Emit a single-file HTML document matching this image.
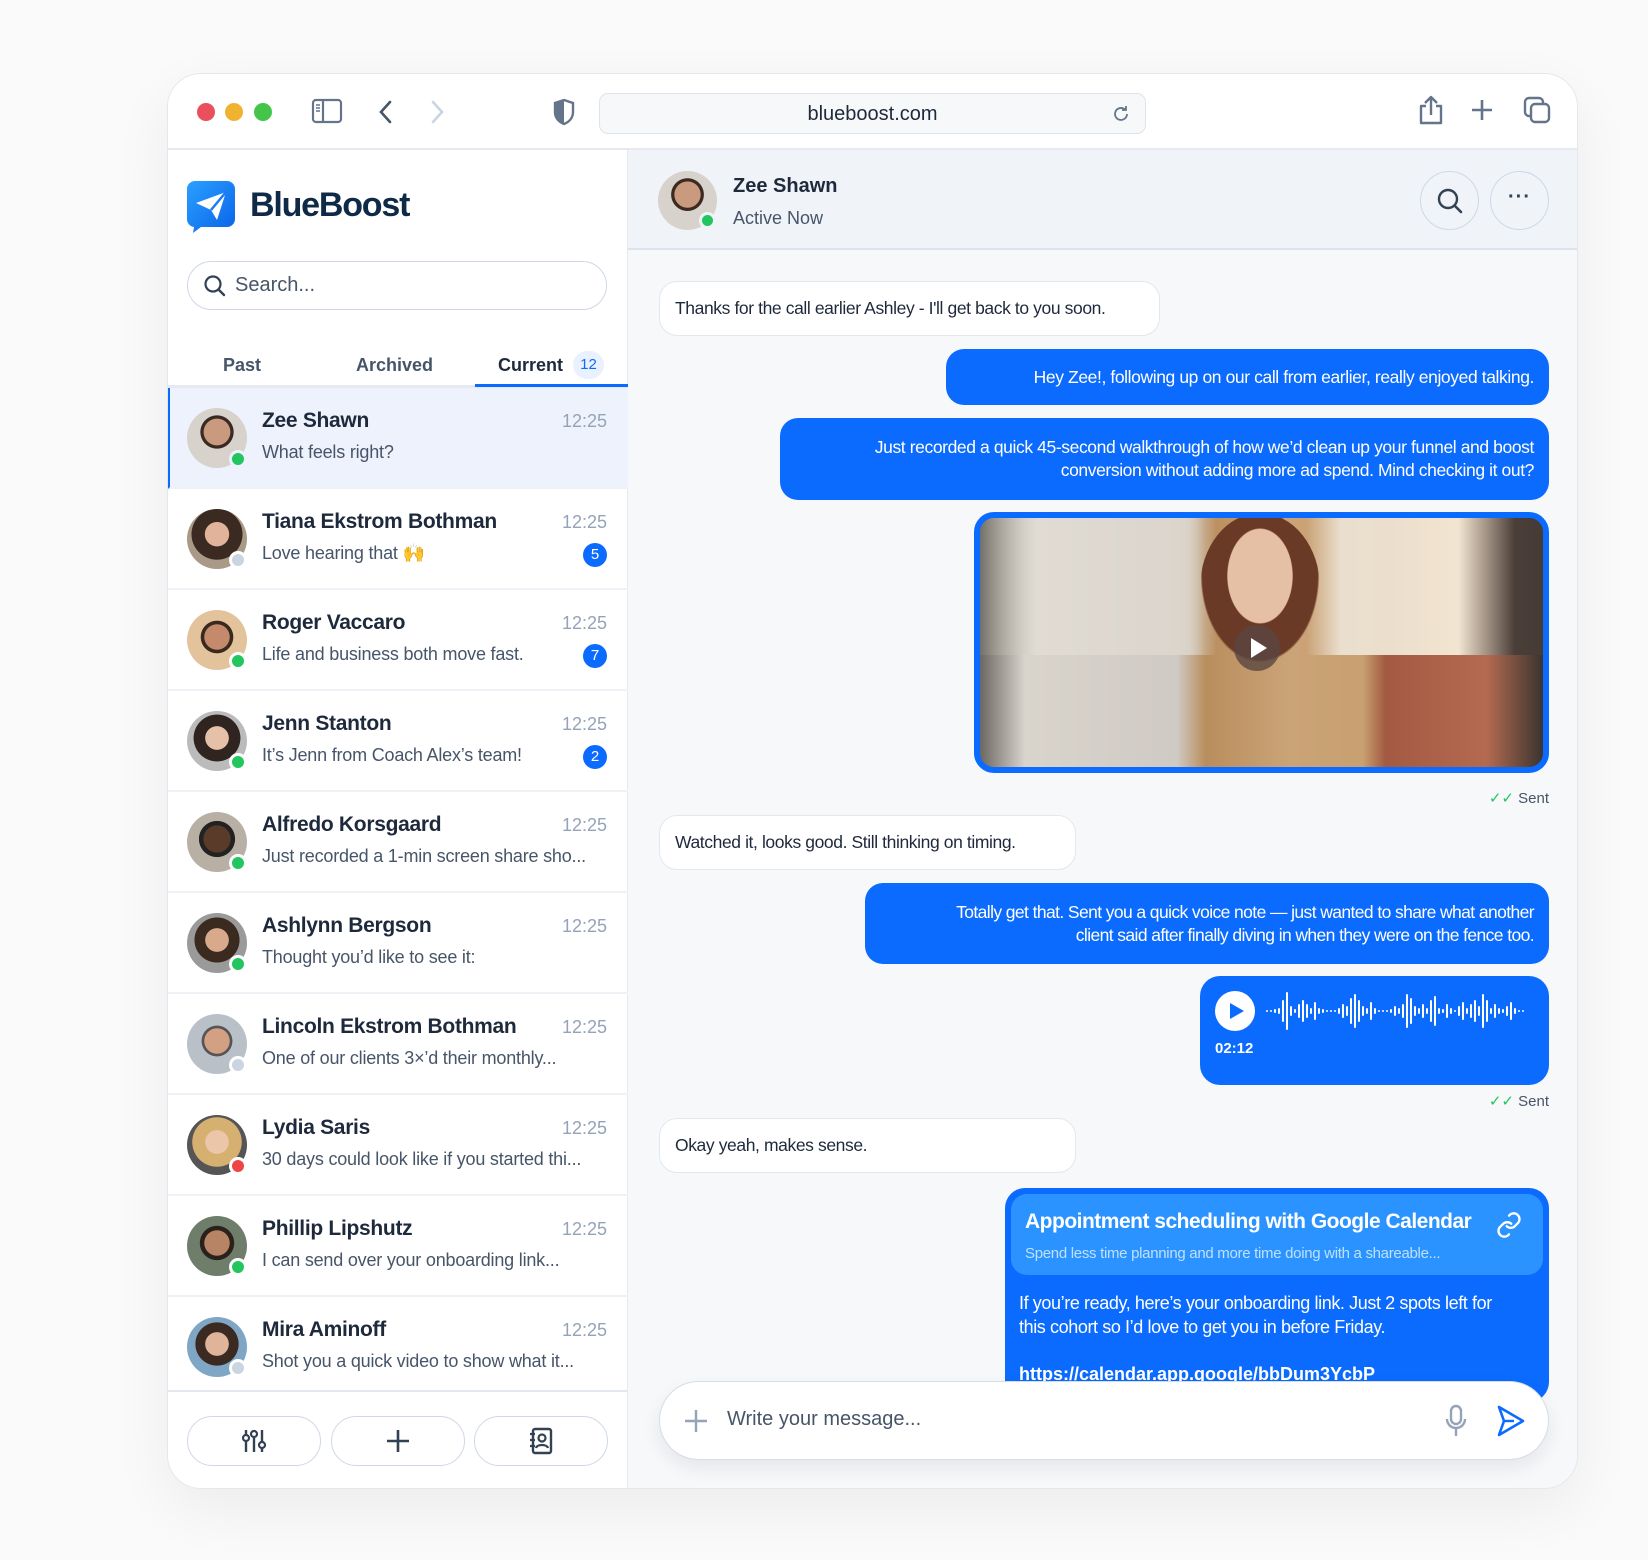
<!DOCTYPE html>
<html><head><meta charset="utf-8"><style>
*{box-sizing:border-box;margin:0;padding:0}
body{width:1648px;height:1560px;background:#fafafa;font-family:"Liberation Sans",sans-serif;position:relative;overflow:hidden;color:#1e293b}
.abs{position:absolute}
.win{left:167px;top:73px;width:1411px;height:1416px;background:#fff;border:1px solid #e3e7ee;border-radius:34px;overflow:hidden;box-shadow:0 20px 60px rgba(0,0,0,.06)}
.tb{left:0;top:0;width:1411px;height:76px;border-bottom:2px solid #e6e9ef;background:#fff}
.dot{width:18px;height:18px;border-radius:50%;top:29px}
.url{left:431px;top:19px;width:547px;height:41px;border:1px solid #dfe3ea;border-radius:9px;background:#f7f8fa;text-align:center;line-height:40px;font-size:20px;color:#1e293b}
.side{left:0;top:76px;width:460px;height:1340px;background:#fff;border-right:1px solid #e6e9ef}
.chat{left:460px;top:76px;width:951px;height:1340px;background:#f7f8fa;overflow:hidden}
.item{position:absolute;left:0;width:460px;height:101px;border-bottom:2px solid #eef1f5}
.av{position:absolute;left:19px;top:20px;width:60px;height:60px;border-radius:50%}
.st{position:absolute;left:61px;top:62px;width:18px;height:18px;border-radius:50%;border:3px solid #fff}
.nm{position:absolute;left:94px;top:21px;font-size:21px;font-weight:bold;color:#1e293b;letter-spacing:-.3px}
.pv{position:absolute;left:94px;top:54px;font-size:18px;color:#475569;white-space:nowrap;letter-spacing:-.2px}
.tm{position:absolute;right:21px;top:23px;font-size:18px;color:#94a3b8}
.bd{position:absolute;right:21px;top:54px;width:24px;height:24px;border-radius:50%;background:#0b6bff;color:#fff;font-size:15px;text-align:center;line-height:24px}
.bub{position:absolute;font-size:17.5px;line-height:23px;letter-spacing:-.4px;border-radius:18px;padding:0 15px;display:flex;align-items:center;white-space:nowrap}
.in{background:#fff;border:1px solid #e3e7ee;color:#1e293b}
.out{background:#0b6bff;color:#fff;justify-content:flex-end;text-align:right}
.fb{position:absolute;top:1266px;width:134px;height:50px;border:1.5px solid #cfd8e6;border-radius:25px;display:flex;align-items:center;justify-content:center}
.sent{position:absolute;font-size:15px;color:#475569;right:30px}
</style></head><body>
<div class="abs win">
 <div class="abs tb">
  <div class="abs dot" style="left:29px;background:#e9505c"></div>
  <div class="abs dot" style="left:57px;background:#f0b330"></div>
  <div class="abs dot" style="left:86px;background:#44c54a"></div>
  <svg class="abs" style="left:143px;top:24px" width="32" height="28" viewBox="0 0 32 28"><rect x="2" y="2" width="28" height="22" rx="3" fill="none" stroke="#64748b" stroke-width="2.2"/><line x1="12" y1="2" x2="12" y2="24" stroke="#64748b" stroke-width="2.2"/><path d="M5 7h4M5 10h4M5 13h4" stroke="#64748b" stroke-width="1.5"/></svg>
  <svg class="abs" style="left:208px;top:24px" width="20" height="28"><path d="M14 4L5 14l9 10" fill="none" stroke="#475569" stroke-width="2.6" stroke-linecap="round"/></svg>
  <svg class="abs" style="left:259px;top:24px" width="20" height="28"><path d="M6 4l9 10-9 10" fill="none" stroke="#cbd5e1" stroke-width="2.6" stroke-linecap="round"/></svg>
  <svg class="abs" style="left:384px;top:24px" width="24" height="28" viewBox="0 0 24 28"><path d="M12 2L3 5v9c0 6 4 10 9 12 5-2 9-6 9-12V5z" fill="none" stroke="#64748b" stroke-width="2.4"/><path d="M12 2L3 5v9c0 6 4 10 9 12z" fill="#64748b"/></svg>
  <div class="abs url">blueboost.com<svg class="abs" style="right:14px;top:10px" width="20" height="20" viewBox="0 0 20 20"><path d="M16 10a6 6 0 1 1-2-4.5" fill="none" stroke="#64748b" stroke-width="1.8"/><path d="M15 2v4h-4" fill="none" stroke="#64748b" stroke-width="1.8"/></svg></div>
  <svg class="abs" style="left:1250px;top:20px" width="26" height="32" viewBox="0 0 26 32"><path d="M8 12H3v17h20V12h-5M13 21V3M7 9l6-6 6 6" fill="none" stroke="#64748b" stroke-width="2.4" stroke-linejoin="round"/></svg>
  <svg class="abs" style="left:1302px;top:24px" width="24" height="24"><path d="M12 2v20M2 12h20" stroke="#64748b" stroke-width="2.6"/></svg>
  <svg class="abs" style="left:1355px;top:22px" width="28" height="28" viewBox="0 0 28 28"><rect x="2" y="2" width="18" height="18" rx="4" fill="none" stroke="#64748b" stroke-width="2.4"/><rect x="8" y="8" width="18" height="18" rx="4" fill="#fff" stroke="#64748b" stroke-width="2.4"/></svg>
 </div>
 <div class="abs side">
  <svg class="abs" style="left:19px;top:31px" width="48" height="52" viewBox="0 0 48 52"><defs><linearGradient id="lg" x1="0" y1="0" x2="1" y2="1"><stop offset="0" stop-color="#2aa0ff"/><stop offset="1" stop-color="#0a63e8"/></linearGradient></defs><path d="M8 0h32a8 8 0 0 1 8 8v30a8 8 0 0 1-8 8H14l-8 6 1-6a8 8 0 0 1-7-8V8a8 8 0 0 1 8-8z" fill="url(#lg)"/><path d="M9 22l30-11-9 28-6-10z" fill="#fff"/><path d="M24 29l15-18" stroke="#1a7df5" stroke-width="2.5"/></svg>
  <div class="abs" style="left:82px;top:36px;font-size:34px;font-weight:bold;color:#0f2a47;letter-spacing:-1.2px">BlueBoost</div>
  <div class="abs" style="left:19px;top:111px;width:420px;height:49px;border:1.5px solid #cfd8e6;border-radius:25px">
   <svg class="abs" style="left:15px;top:12px" width="24" height="24"><circle cx="10" cy="10" r="7.5" fill="none" stroke="#334155" stroke-width="2.2"/><path d="M16 16l5 5" stroke="#334155" stroke-width="2.4" stroke-linecap="round"/></svg>
   <div class="abs" style="left:47px;top:12px;font-size:20px;color:#475569">Search...</div>
  </div>
  <div class="abs" style="left:55px;top:205px;font-size:18px;font-weight:bold;color:#475569">Past</div>
  <div class="abs" style="left:188px;top:205px;font-size:18px;font-weight:bold;color:#475569">Archived</div>
  <div class="abs" style="left:330px;top:205px;font-size:18px;font-weight:bold;color:#1e293b">Current</div>
  <div class="abs" style="left:405px;top:201px;width:31px;height:28px;border-radius:14px;background:#eaf1fe;color:#0b6bff;font-size:15px;text-align:center;line-height:28px">12</div>
  <div class="abs" style="left:0;top:235px;width:460px;height:3px;background:#e6e9ef"></div>
  <div class="abs" style="left:307px;top:234px;width:153px;height:3px;background:#0b6bff"></div>
  <div class="abs" style="left:0;top:238px;width:460px;height:1003px;overflow:hidden">
   <div class="item" style="top:0;background:#eef2fd;border-left:2px solid #0b6bff"><div class="av" style="left:17px;background:radial-gradient(circle at 50% 40%,#c99a7d 0 28%,#3a2a22 29% 35%,#d8d2cc 36%)"></div><div class="st" style="left:59px;background:#22c55e;border-color:#eef2fd"></div><div class="nm" style="left:92px">Zee Shawn</div><div class="pv" style="left:92px">What feels right?</div><div class="tm">12:25</div></div>
   <div class="item" style="top:101px"><div class="av" style="background:radial-gradient(circle at 50% 42%,#e0b39a 0 26%,#3b2a22 27% 55%,#a89a86 56%)"></div><div class="st" style="background:#cbd5e1"></div><div class="nm">Tiana Ekstrom Bothman</div><div class="pv">Love hearing that 🙌</div><div class="tm">12:25</div><div class="bd">5</div></div>
   <div class="item" style="top:202px"><div class="av" style="background:radial-gradient(circle at 50% 45%,#c48a6c 0 28%,#3a2a1e 29% 36%,#e3c39c 37%)"></div><div class="st" style="background:#22c55e"></div><div class="nm">Roger Vaccaro</div><div class="pv">Life and business both move fast.</div><div class="tm">12:25</div><div class="bd">7</div></div>
   <div class="item" style="top:303px"><div class="av" style="background:radial-gradient(circle at 50% 45%,#e6c1a8 0 26%,#2f2420 27% 52%,#bbb 53%)"></div><div class="st" style="background:#22c55e"></div><div class="nm">Jenn Stanton</div><div class="pv">It’s Jenn from Coach Alex’s team!</div><div class="tm">12:25</div><div class="bd">2</div></div>
   <div class="item" style="top:404px"><div class="av" style="background:radial-gradient(circle at 50% 45%,#5a3a28 0 30%,#222 31% 40%,#b8b0a5 41%)"></div><div class="st" style="background:#22c55e"></div><div class="nm">Alfredo Korsgaard</div><div class="pv">Just recorded a 1-min screen share sho...</div><div class="tm">12:25</div></div>
   <div class="item" style="top:505px"><div class="av" style="background:radial-gradient(circle at 50% 45%,#d9a98c 0 26%,#3a2a20 27% 50%,#9a9a9a 51%)"></div><div class="st" style="background:#22c55e"></div><div class="nm">Ashlynn Bergson</div><div class="pv">Thought you’d like to see it:</div><div class="tm">12:25</div></div>
   <div class="item" style="top:606px"><div class="av" style="background:radial-gradient(circle at 50% 45%,#d4a084 0 28%,#555 29% 34%,#b9c0c8 35%)"></div><div class="st" style="background:#cbd5e1"></div><div class="nm">Lincoln Ekstrom Bothman</div><div class="pv">One of our clients 3×’d their monthly...</div><div class="tm">12:25</div></div>
   <div class="item" style="top:707px"><div class="av" style="background:radial-gradient(circle at 50% 45%,#ecc6a8 0 26%,#d6b070 27% 55%,#555 56%)"></div><div class="st" style="background:#ef4444"></div><div class="nm">Lydia Saris</div><div class="pv">30 days could look like if you started thi...</div><div class="tm">12:25</div></div>
   <div class="item" style="top:808px"><div class="av" style="background:radial-gradient(circle at 50% 45%,#b88466 0 28%,#2a211b 29% 38%,#6f7e6a 39%)"></div><div class="st" style="background:#22c55e"></div><div class="nm">Phillip Lipshutz</div><div class="pv">I can send over your onboarding link...</div><div class="tm">12:25</div></div>
   <div class="item" style="top:909px;border-bottom:none"><div class="av" style="background:radial-gradient(circle at 50% 45%,#e0b49a 0 26%,#3a2a22 27% 48%,#7fa6c4 49%)"></div><div class="st" style="background:#cbd5e1"></div><div class="nm">Mira Aminoff</div><div class="pv">Shot you a quick video to show what it...</div><div class="tm">12:25</div></div>
  </div>
  <div class="abs" style="left:0;top:1240px;width:460px;height:2px;background:#e3e8ef"></div>
  <div class="fb" style="left:19px"><svg width="28" height="26" viewBox="0 0 28 26"><path d="M6 2v22M14 2v22M22 2v22" stroke="#334155" stroke-width="2.4"/><circle cx="6" cy="10" r="3" fill="#fff" stroke="#334155" stroke-width="2.2"/><circle cx="14" cy="6" r="3" fill="#fff" stroke="#334155" stroke-width="2.2"/><circle cx="22" cy="17" r="3" fill="#fff" stroke="#334155" stroke-width="2.2"/></svg></div>
  <div class="fb" style="left:163px"><svg width="26" height="26"><path d="M13 2v22M2 13h22" stroke="#334155" stroke-width="2.6"/></svg></div>
  <div class="fb" style="left:306px"><svg width="26" height="28" viewBox="0 0 26 28"><rect x="5" y="2" width="18" height="24" rx="2" fill="none" stroke="#334155" stroke-width="2.4"/><circle cx="14" cy="11" r="3.5" fill="none" stroke="#334155" stroke-width="2.2"/><path d="M8 21c1-4 11-4 12 0M2 7h5M2 13h5M2 19h5" stroke="#334155" stroke-width="2.2" fill="none"/></svg></div>
 </div>
 <div class="abs chat">
  <div class="abs" style="left:0;top:0;width:951px;height:100px;background:#f0f3f8;border-bottom:2px solid #dde3ec"></div>
  <div class="abs" style="left:30px;top:21px;width:59px;height:59px;border-radius:50%;background:radial-gradient(circle at 50% 40%,#c99a7d 0 28%,#3a2a22 29% 35%,#d8d2cc 36%)"></div>
  <div class="abs" style="left:71px;top:62px;width:17px;height:17px;border-radius:50%;background:#22c55e;border:3px solid #f0f3f8"></div>
  <div class="abs" style="left:105px;top:25px;font-size:20px;font-weight:bold;color:#1e293b">Zee Shawn</div>
  <div class="abs" style="left:105px;top:58px;font-size:18px;color:#475569">Active Now</div>
  <div class="abs" style="left:792px;top:21px;width:59px;height:59px;border-radius:50%;border:1.5px solid #cfd8e6"><svg class="abs" style="left:15px;top:15px" width="28" height="28"><circle cx="12" cy="12" r="9" fill="none" stroke="#334155" stroke-width="2.4"/><path d="M19 19l6 6" stroke="#334155" stroke-width="2.6" stroke-linecap="round"/></svg></div>
  <div class="abs" style="left:862px;top:21px;width:59px;height:59px;border-radius:50%;border:1.5px solid #cfd8e6;text-align:center;line-height:50px;font-size:20px;font-weight:bold;color:#334155;letter-spacing:1px">···</div>

  <div class="bub in" style="left:31px;top:131px;width:501px;height:55px">Thanks for the call earlier Ashley - I'll get back to you soon.</div>
  <div class="bub out" style="left:318px;top:199px;width:603px;height:56px">Hey Zee!, following up on our call from earlier, really enjoyed talking.</div>
  <div class="bub out" style="left:152px;top:268px;width:769px;height:82px">Just recorded a quick 45-second walkthrough of how we’d clean up your funnel and boost<br>conversion without adding more ad spend. Mind checking it out?</div>
  <div class="abs" style="left:346px;top:362px;width:575px;height:261px;border:6px solid #0b6bff;border-radius:20px;overflow:hidden;background:linear-gradient(90deg,#6b6762 0%,#d9d4cc 8%,#cfcac3 35%,#b98e5e 40%,#caa377 55%,#c8a071 68%,#a35a42 72%,#b46a4f 90%,#3a3430 100%)">
   <div class="abs" style="left:0;top:0;width:100%;height:55%;background:linear-gradient(90deg,rgba(120,120,110,.5) 0%,rgba(225,220,212,.9) 10%,rgba(220,214,205,.9) 37%,rgba(0,0,0,0) 42%,rgba(0,0,0,0) 58%,rgba(235,225,210,.95) 64%,rgba(245,235,215,.95) 85%,rgba(70,60,55,.9) 95%)"></div>
   <div class="abs" style="left:220px;top:-5px;width:120px;height:150px;border-radius:50%;background:radial-gradient(ellipse at 50% 42%,#e6c0a4 0 38%,#6a3a26 39% 68%,transparent 70%)"></div>
   <div class="abs" style="left:254px;top:107px;width:46px;height:46px;border-radius:50%;background:rgba(90,70,65,.8)"><svg class="abs" style="left:15px;top:12px" width="20" height="22"><path d="M2 1l16 10L2 21z" fill="#fff"/></svg></div>
  </div>
  <div class="sent" style="top:639px"><span style="color:#22c55e">✓✓</span> Sent</div>

  <div class="bub in" style="left:31px;top:665px;width:417px;height:55px">Watched it, looks good. Still thinking on timing.</div>
  <div class="bub out" style="left:237px;top:733px;width:684px;height:81px;letter-spacing:-.6px">Totally get that. Sent you a quick voice note — just wanted to share what another<br>client said after finally diving in when they were on the fence too.</div>
  <div class="abs" style="left:572px;top:826px;width:349px;height:109px;border-radius:20px;background:#0b6bff">
   <div class="abs" style="left:15px;top:15px;width:40px;height:40px;border-radius:50%;background:#fff"><svg class="abs" style="left:14px;top:11px" width="16" height="18"><path d="M1 1l14 8L1 17z" fill="#0b6bff"/></svg></div>
   <svg class="abs" style="left:65px;top:13px" width="272" height="44" viewBox="0 0 272 44">
    <g stroke="#fff" stroke-width="2" stroke-linecap="round">
    <path d="M2 22v0M6 22v0M10 21v2M14 20v4M18 12v20M22 4v36M26 18v8M30 21v2M34 16v12M38 12v20M42 16v12M46 20v4M50 14v16M54 20v4M58 21v2M62 22v0M66 22v0M70 22v0M74 20v4M78 16v12M82 18v8M86 10v24M90 6v32M94 12v20M98 18v8M102 20v4M106 14v16M110 20v4M114 22v0M118 22v0M122 22v0M126 21v2M130 18v8M134 20v4M138 16v12M142 6v32M146 10v24M150 18v8M154 20v4M158 16v12M162 20v4M166 12v20M170 8v28M174 20v4M178 21v2M182 16v12M186 20v4M190 22v0M194 18v8M198 14v16M202 20v4M206 16v12M210 12v20M214 18v8M218 6v32M222 12v20M226 20v4M230 16v12M234 20v4M238 21v2M242 18v8M246 14v16M250 20v4M254 22v0M258 22v0"/></g></svg>
   <div class="abs" style="left:15px;top:64px;font-size:15px;font-weight:bold;color:#fff">02:12</div>
  </div>
  <div class="sent" style="top:942px"><span style="color:#22c55e">✓✓</span> Sent</div>

  <div class="bub in" style="left:31px;top:968px;width:417px;height:55px">Okay yeah, makes sense.</div>

  <div class="abs" style="left:377px;top:1038px;width:544px;height:214px;border-radius:20px;background:#0b6bff;overflow:hidden">
   <div class="abs" style="left:6px;top:6px;width:532px;height:81px;border-radius:16px;background:#2b93ff">
    <div class="abs" style="left:14px;top:16px;font-size:21px;font-weight:bold;color:#fff;letter-spacing:-.5px">Appointment scheduling with Google Calendar</div>
    <div class="abs" style="left:14px;top:51px;font-size:15px;color:#bfe0ff;letter-spacing:-.3px">Spend less time planning and more time doing with a shareable...</div>
    <svg class="abs" style="left:484px;top:17px" width="28" height="28" viewBox="0 0 24 24"><path d="M10 13a5 5 0 0 0 7 0l3-3a5 5 0 0 0-7-7l-1 1M14 11a5 5 0 0 0-7 0l-3 3a5 5 0 0 0 7 7l1-1" fill="none" stroke="#fff" stroke-width="2" stroke-linecap="round"/></svg>
   </div>
   <div class="abs" style="left:14px;top:103px;font-size:18px;line-height:24px;color:#fff;letter-spacing:-.4px">If you’re ready, here’s your onboarding link. Just 2 spots left for<br>this cohort so I’d love to get you in before Friday.</div>
   <div class="abs" style="left:14px;top:176px;font-size:18px;font-weight:bold;color:#fff">https://calendar.app.google/bbDum3YcbP</div>
  </div>

  <div class="abs" style="left:31px;top:1231px;width:890px;height:79px;border-radius:40px;background:#fff;border:1.5px solid #d5dde8;box-shadow:0 8px 18px rgba(15,23,42,.08)">
   <svg class="abs" style="left:24px;top:27px" width="24" height="24"><path d="M12 1v22M1 12h22" stroke="#94a3b8" stroke-width="2.4"/></svg>
   <div class="abs" style="left:67px;top:26px;font-size:20px;color:#475569">Write your message...</div>
   <svg class="abs" style="left:784px;top:22px" width="24" height="34" viewBox="0 0 24 34"><rect x="7" y="2" width="10" height="18" rx="5" fill="none" stroke="#94a3b8" stroke-width="2.4"/><path d="M3 15a9 9 0 0 0 18 0M12 24v8" fill="none" stroke="#94a3b8" stroke-width="2.4"/></svg>
   <svg class="abs" style="left:836px;top:22px" width="30" height="34" viewBox="0 0 30 34"><path d="M3 3l24 14L3 31l5-14z" fill="none" stroke="#0b6bff" stroke-width="2.6" stroke-linejoin="round"/><path d="M8 17h10" stroke="#0b6bff" stroke-width="2.4"/></svg>
  </div>
 </div>
</div>
</body></html>
